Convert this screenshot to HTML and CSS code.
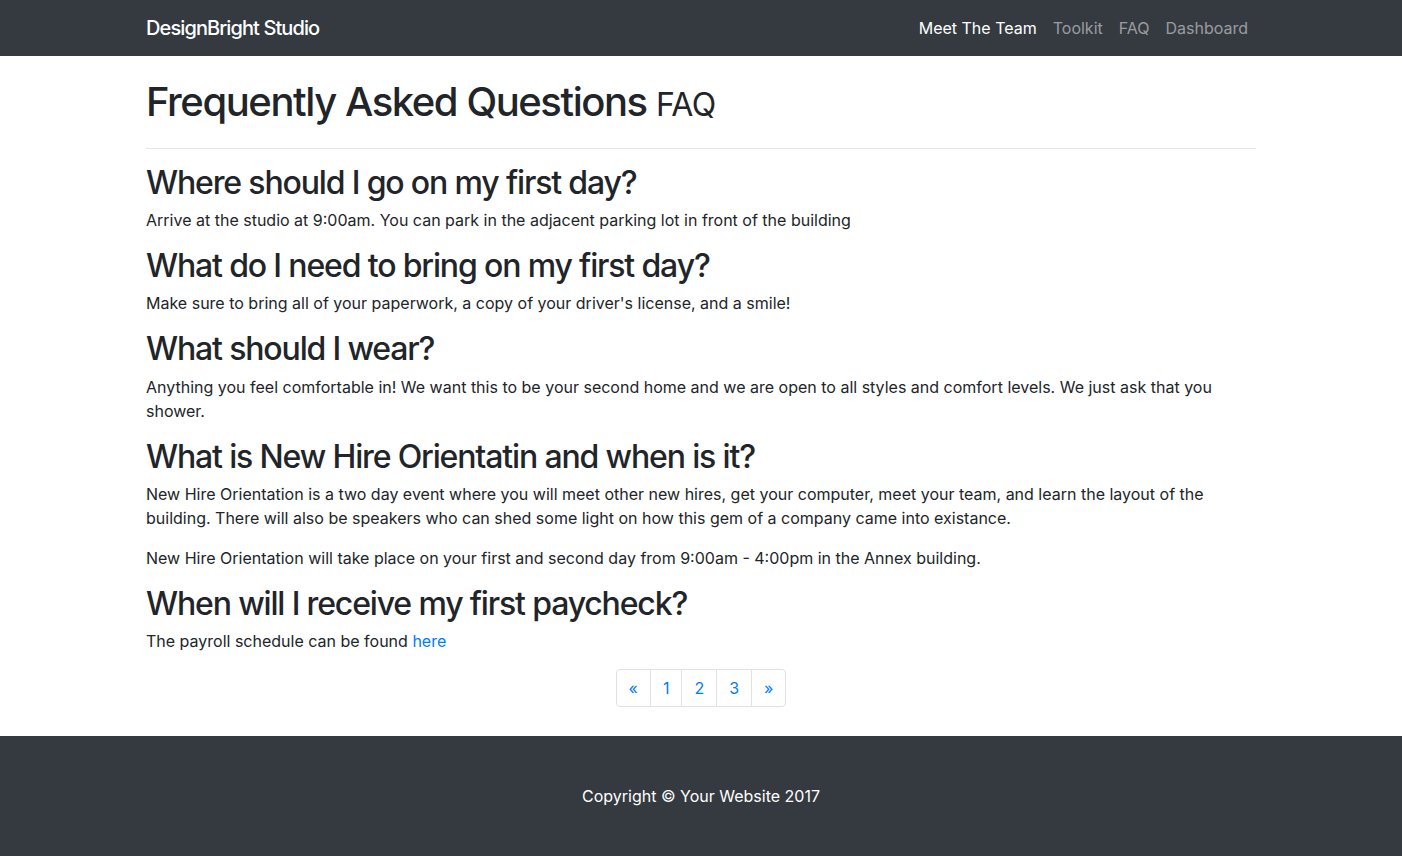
FILE: index.html
```html
<!DOCTYPE html>
<html lang="en">
<head>
<meta charset="utf-8">
<title>FAQ - DesignBright Studio</title>
<link rel="stylesheet" href="styles.css">
</head>
<body>
<nav class="navbar">
  <div class="container navbar-inner">
    <a class="brand" href="#">DesignBright Studio</a>
    <ul class="nav-links">
      <li><a class="nav-link active" href="#">Meet The Team</a></li>
      <li><a class="nav-link" href="#">Toolkit</a></li>
      <li><a class="nav-link" href="#">FAQ</a></li>
      <li><a class="nav-link" href="#">Dashboard</a></li>
    </ul>
  </div>
</nav>

<main class="container">
  <h1 class="page-title">Frequently Asked Questions <small>FAQ</small></h1>
  <hr class="divider">

  <h2>Where should I go on my first day?</h2>
  <p>Arrive at the studio at 9:00am. You can park in the adjacent parking lot in front of the building</p>

  <h2>What do I need to bring on my first day?</h2>
  <p>Make sure to bring all of your paperwork, a copy of your driver's license, and a smile!</p>

  <h2>What should I wear?</h2>
  <p>Anything you feel comfortable in! We want this to be your second home and we are open to all styles and comfort levels. We just ask that you shower.</p>

  <h2>What is New Hire Orientatin and when is it?</h2>
  <p>New Hire Orientation is a two day event where you will meet other new hires, get your computer, meet your team, and learn the layout of the building. There will also be speakers who can shed some light on how this gem of a company came into existance.</p>
  <p>New Hire Orientation will take place on your first and second day from 9:00am - 4:00pm in the Annex building.</p>

  <h2>When will I receive my first paycheck?</h2>
  <p>The payroll schedule can be found <a href="#">here</a></p>

  <ul class="pagination">
    <li><a class="page-link first" href="#">&laquo;</a></li>
    <li><a class="page-link" href="#">1</a></li>
    <li><a class="page-link" href="#">2</a></li>
    <li><a class="page-link" href="#">3</a></li>
    <li><a class="page-link last" href="#">&raquo;</a></li>
  </ul>
</main>

<footer class="footer">
  <p class="copyright">Copyright &copy; Your Website 2017</p>
</footer>
</body>
</html>
```

FILE: styles.css
```css
* { box-sizing: border-box; }

html, body {
  margin: 0;
  padding: 0;
}

body {
  font-family: Inter, "Noto Sans", "Liberation Sans", sans-serif;
  font-size: 16px;
  line-height: 1.5;
  color: #212529;
  background: #fff;
}

a {
  color: #007bff;
  text-decoration: none;
}

.container {
  width: 1140px;
  margin: 0 auto;
  padding: 0 15px;
}

/* Navbar */
.navbar {
  background: #343a40;
  height: 56px;
}

.navbar-inner {
  display: flex;
  align-items: center;
  justify-content: space-between;
  height: 56px;
}

.brand {
  color: #fff;
  font-size: 20px;
  line-height: 30px;
  letter-spacing: -0.045em;
  font-weight: 500;
}

.nav-links {
  display: flex;
  list-style: none;
  margin: 0;
  padding: 0;
}

.nav-link {
  display: block;
  padding: 8px;
  color: rgba(255, 255, 255, 0.5);
}

.nav-link.active {
  color: #fff;
}

/* Content */
h1, h2 {
  font-weight: 500;
  line-height: 1.1;
  margin-top: 0;
  margin-bottom: 8px;
  letter-spacing: -0.036em;
}

.page-title {
  font-size: 40px;
  margin-top: 24px;
  margin-bottom: 24px;
}

.page-title small {
  font-size: 80%;
  font-weight: 400;
  letter-spacing: -0.02em;
}

.divider {
  border: 0;
  border-top: 1px solid rgba(0, 0, 0, 0.1);
  margin: 0 0 16px;
}

h2 {
  font-size: 32px;
}

p {
  margin: 0 0 16px;
}

/* Pagination */
.pagination {
  display: flex;
  justify-content: center;
  list-style: none;
  padding: 0;
  margin: 0 0 29px;
}

.page-link {
  display: block;
  padding: 8px 12px;
  line-height: 20px;
  border: 1px solid #dee2e6;
  margin-left: -1px;
  color: #007bff;
}

.page-link.first {
  margin-left: 0;
  border-radius: 4px 0 0 4px;
}

.page-link.last {
  border-radius: 0 4px 4px 0;
}

/* Footer */
.footer {
  background: #343a40;
  padding: 48px 0;
}

.copyright {
  margin: 0;
  text-align: center;
  color: #fff;
}
```
